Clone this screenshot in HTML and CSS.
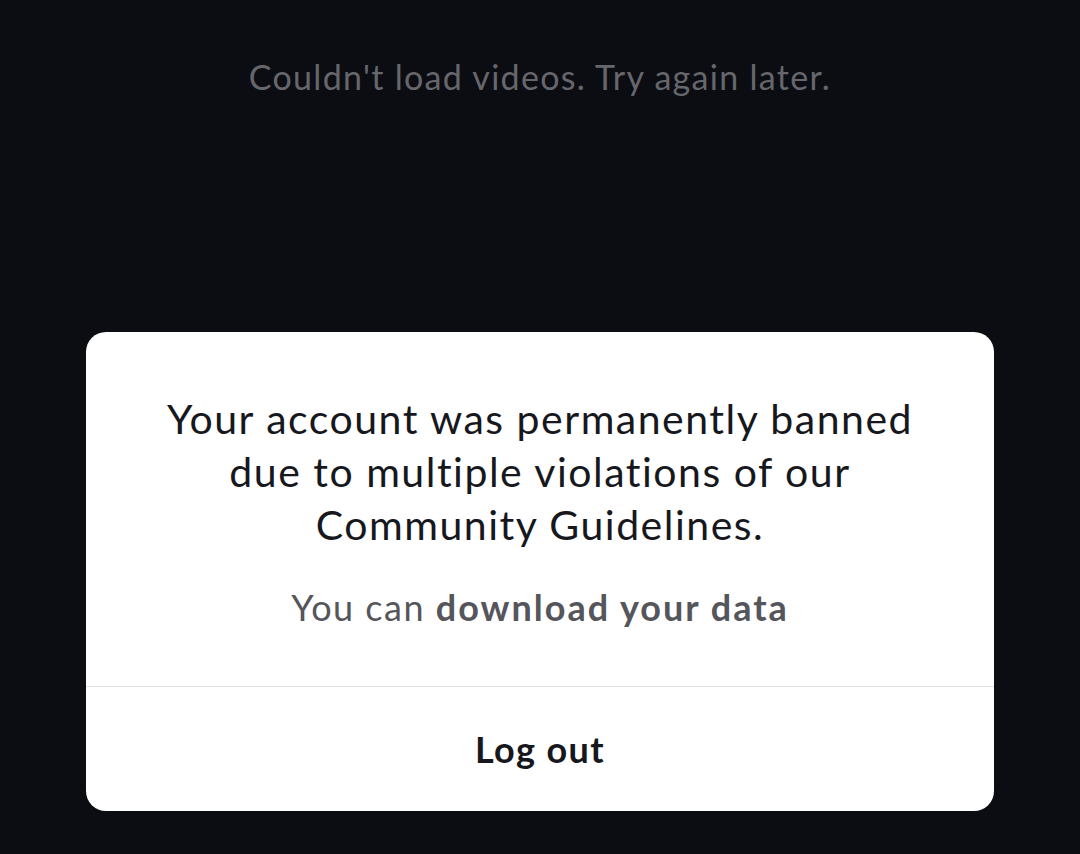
FILE: index.html
```html
<!DOCTYPE html>
<html>
<head>
<meta charset="utf-8">
<link rel="stylesheet" href="styles.css">
</head>
<body>
<div class="screen">
  <p class="empty">Couldn't load videos. Try again later.</p>
  <div class="dialog">
    <div class="body">
      <p class="title">Your account was permanently banned due to multiple violations of our Community Guidelines.</p>
      <p class="sub">You can <b>download your data</b></p>
    </div>
    <div class="action">Log out</div>
  </div>
</div>
</body>
</html>
```
FILE: styles.css
```css
html, body {
  margin: 0;
  padding: 0;
  background: #0c0d12;
}
.screen {
  width: 1080px;
  height: 854px;
  box-sizing: border-box;
  display: flex;
  flex-direction: column;
  align-items: center;
  font-family: Lato, "Liberation Sans", sans-serif;
}
.empty {
  margin: 54px 0 0;
  font-size: 34px;
  line-height: 46px;
  letter-spacing: 1.3px;
  color: #66676c;
}
.dialog {
  margin-top: 232px;
  width: 908px;
  background: #fff;
  border-radius: 20px;
  display: flex;
  flex-direction: column;
}
.body {
  padding: 60px 40px 57px;
  text-align: center;
  border-bottom: 1px solid #e3e3e4;
}
.title {
  margin: 0 auto;
  width: 800px;
  font-size: 41px;
  line-height: 53px;
  letter-spacing: 1.5px;
  color: #17181d;
}
.sub {
  margin: 34px 0 0;
  font-size: 36px;
  line-height: 44px;
  letter-spacing: 1.5px;
  color: #55565c;
}
.sub b {
  font-weight: 700;
  letter-spacing: 2px;
}
.action {
  height: 124px;
  display: flex;
  align-items: center;
  justify-content: center;
  font-size: 36px;
  font-weight: 700;
  letter-spacing: 1.4px;
  color: #17181d;
}
```
